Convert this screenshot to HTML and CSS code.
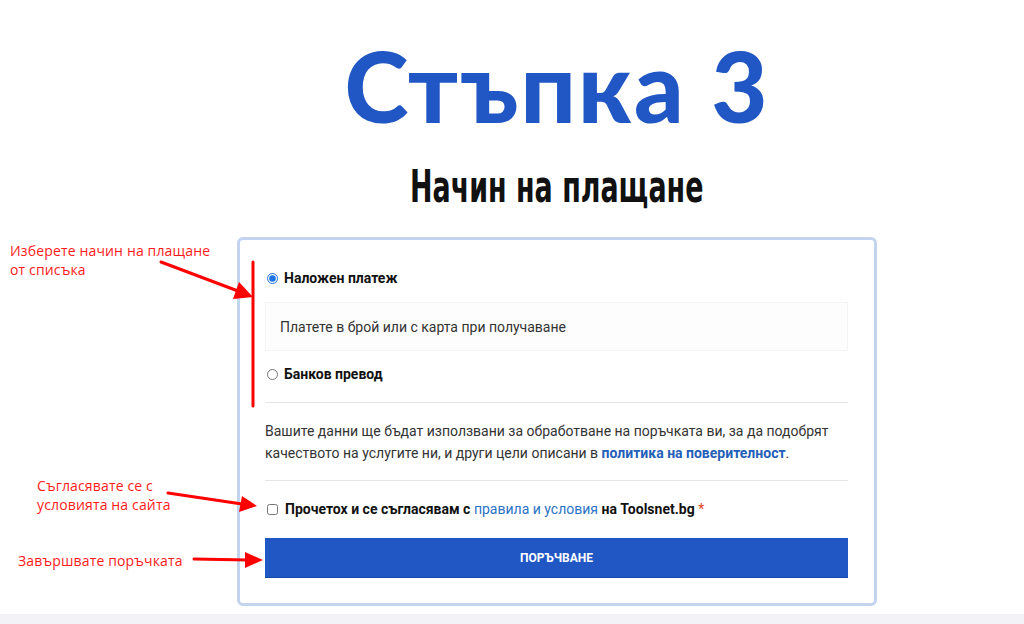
FILE: index.html
```html
<!DOCTYPE html>
<html lang="bg">
<head>
<meta charset="utf-8">
<link rel="stylesheet" href="styles.css">
</head>
<body>
<div class="page">
  <main class="col">
    <h1 class="step">Стъпка 3</h1>
    <h2 class="sub"><span class="sub-text">Начин на плащане</span></h2>
    <section class="card">
      <div class="method">
        <label class="opt"><input type="radio" name="pay" checked><span>Наложен платеж</span></label>
        <div class="desc">Платете в брой или с карта при получаване</div>
      </div>
      <div class="method">
        <label class="opt"><input type="radio" name="pay"><span>Банков превод</span></label>
      </div>
      <hr class="sep">
      <p class="privacy">Вашите данни ще бъдат използвани за обработване на поръчката ви, за да подобрят качеството на услугите ни, и други цели описани в <a href="#" class="bold-link">политика на поверителност</a>.</p>
      <hr class="sep sep2">
      <label class="terms"><input type="checkbox"><span>Прочетох и се съгласявам с <a href="#" class="link">правила и условия</a> на Toolsnet.bg <abbr class="req">*</abbr></span></label>
      <button class="order">ПОРЪЧВАНЕ</button>
    </section>
  </main>
  <div class="footer-strip"></div>

  <div class="note n1">Изберете начин на плащане<br>от списъка</div>
  <div class="note n2">Съгласявате се с<br>условията на сайта</div>
  <div class="note n3">Завършвате поръчката</div>
  <svg class="arrows" width="1024" height="624" viewBox="0 0 1024 624">
    <g stroke="#ff0000" stroke-width="3" stroke-linecap="round" fill="none">
      <line x1="253" y1="262" x2="253" y2="406"/>
      <line x1="161" y1="262" x2="238" y2="291"/>
      <line x1="168" y1="493" x2="242" y2="504"/>
      <line x1="194" y1="559" x2="248" y2="560"/>
    </g>
    <g fill="#ff0000">
      <polygon points="253,297 233,299 239,282"/>
      <polygon points="257,506 239,512 242,496"/>
      <polygon points="263,560 245,568 245,552"/>
    </g>
  </svg>
</div>
</body>
</html>
```

FILE: styles.css
```css
* { box-sizing: border-box; }
html, body { margin: 0; padding: 0; background: #fff; }
body { font-family: Roboto, "Noto Sans", sans-serif; color: #222; }
.page { position: relative; width: 1024px; height: 624px; overflow: hidden; }
.col { margin-left: 237px; width: 640px; padding-top: 30px; }
.step {
  margin: 0; text-align: center; color: #2157c5;
  font-family: Lato, "Open Sans", sans-serif; font-weight: 900; font-size: 97px;
  line-height: 112px; letter-spacing: 2.2px;
}
.sub {
  margin: 20px 0 25px; text-align: center; color: #111;
  font-family: "DejaVu Sans Condensed", "DejaVu Sans", sans-serif; font-stretch: condensed;
  font-weight: 700; font-size: 44px; line-height: 50px;
}
.sub-text { display: inline-block; transform: scaleX(0.68); transform-origin: center; white-space: nowrap; }
.card {
  border: 3px solid #c3d4ef; border-radius: 6px;
  padding: 27px 26px 26px 25px; background: #fff;
}
.opt { display: flex; align-items: center; gap: 6px; font-size: 14px; font-weight: 700; color: #111; height: 22px; }
.opt input { margin: 0 0 0 2px; width: 11px; height: 11px; accent-color: #1a73e8; }
.desc {
  margin: 13px 0 12px; padding: 0 14px; height: 49px; display: flex; align-items: center;
  background: #fdfdfd; border: 1px solid #f4f4f4; font-size: 14px; color: #333;
}
.sep { border: 0; border-top: 1px solid #e6e6e6; margin: 17px 0 17px; }
.sep.sep2 { margin: 16px 0 17px; }
.privacy { margin: 0; font-size: 14px; line-height: 22px; color: #333; }
.bold-link { color: #2460b8; font-weight: 700; text-decoration: none; }
.link { color: #2b73c6; text-decoration: none; font-weight: 400; }
.terms { display: flex; align-items: center; gap: 7px; font-size: 14px; font-weight: 700; color: #111; height: 22px; margin-top: 17px; }
.terms input { margin: 0 0 0 2px; width: 11px; height: 11px; }
.req { color: #e2401c; text-decoration: none; font-weight: 400; }
.order {
  display: block; width: 100%; height: 39px; margin-top: 18px;
  background: #2157c5; color: #fff; border: 0; border-radius: 0;
  font-family: Roboto, sans-serif; font-weight: 700; font-size: 12px;
  box-shadow: 0 1px 0 #1a4aa8;
}
.footer-strip { position: absolute; left: 0; right: 0; top: 614px; height: 10px; background: #f3f3f7; }
.note { position: absolute; color: #ff1a1a; font-family: "Open Sans", "Noto Sans", sans-serif; font-size: 14px; line-height: 19px; letter-spacing: 0.15px; }
.n1 { left: 10px; top: 241px; }
.n2 { left: 37px; top: 476px; }
.n3 { left: 18px; top: 551px; }
.arrows { position: absolute; left: 0; top: 0; pointer-events: none; }
```
